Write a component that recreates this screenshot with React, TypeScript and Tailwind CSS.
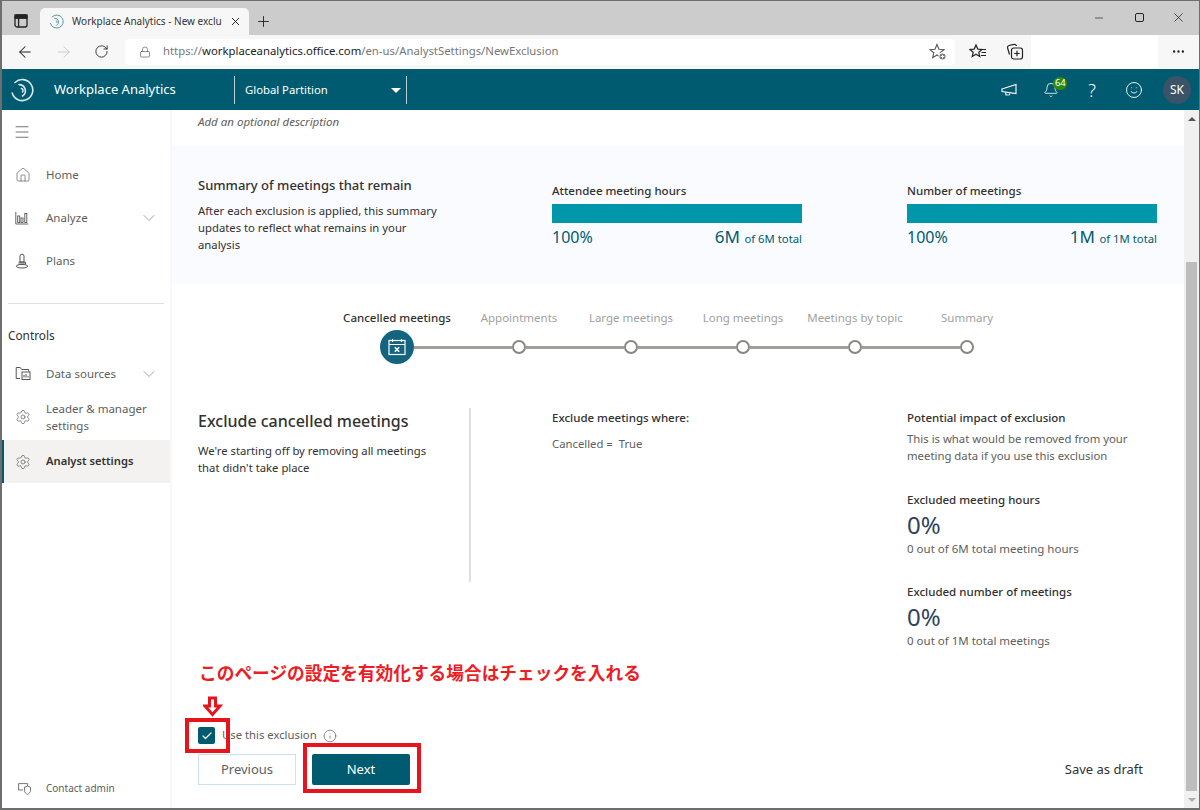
import React from "react";
import { ArrowLeft, ArrowRight, RotateCw, Lock, X, Plus, Minus, Home, ChevronDown, Menu, Settings, Check, Info, Bell, Smile, Ellipsis } from "lucide-react";

const Logo = ({ s, c }: { s: number; c: string }) => (
  <svg width={s} height={s} viewBox="0 0 24 24" fill="none" stroke={c} strokeWidth="1.6" strokeLinecap="round">
    <path d="M5 4.5 A10.5 10.5 0 1 1 2.2 15" />
    <path d="M9 6.6 A6.2 6.2 0 0 1 12.5 18" />
    <path d="M11.5 10.5 A2.2 2.2 0 0 1 12.5 14" />
  </svg>
);

const TabActions = () => (
  <svg width="16" height="16" viewBox="0 0 16 16" fill="none" stroke="#222" strokeWidth="1.3">
    <rect x="2" y="2" width="12" height="12" rx="2" />
    <path d="M2 5.2H14M5.6 5.2V14" />
    <rect x="2" y="2" width="12" height="3" fill="#222" />
  </svg>
);

const FavAdd = () => (
  <svg width="18" height="18" viewBox="0 0 18 18" fill="none" stroke="#555" strokeWidth="1.1">
    <path d="M8 1.5 10 6.200l5 .4-3.800 3.200 1.100 4.800L8 12l-4.300 2.600 1.100-4.800L1 6.600l5-.4Z" />
    <circle cx="13.500" cy="13.500" r="3.600" fill="#777" stroke="#fff" />
    <path d="M11.700 13.500h3.600M13.500 11.700v3.600" stroke="#fff" />
  </svg>
);

const Favs = () => (
  <svg width="18" height="18" viewBox="0 0 18 18" fill="none" stroke="#222" strokeWidth="1.2">
    <path d="M7 2 8.800 6.100l4.200.4-3.200 2.800 1 4.300L7 11.300l-3.800 2.300 1-4.300L1 6.500l4.200-.4Z" />
    <path d="M12 6.500h5M12.500 9.500h4.500M12 12.500h5" />
  </svg>
);

const Collections = () => (
  <svg width="18" height="18" viewBox="0 0 18 18" fill="none" stroke="#222" strokeWidth="1.2">
    <path d="M3.500 11.500 1.600 5A2 2 0 0 1 3 2.500l5-1.100A2 2 0 0 1 10.500 3" />
    <rect x="5.500" y="5" width="11" height="11" rx="2.200" />
    <path d="M11 7.800v5.400M8.300 10.500h5.400" />
  </svg>
);

const Megaphone = () => (
  <svg width="16" height="14" viewBox="0 0 16 14" fill="none" stroke="#fff" strokeWidth="1.1">
    <path d="M1 6 15 1.500v9L1 8.500Z" />
    <path d="M4.500 9.500 5 12l3.500-.2.3-1.500" />
  </svg>
);

const Chart = () => (
  <svg width="14" height="14" viewBox="0 0 14 14" fill="none" stroke="#555" strokeWidth="0.9">
    <path d="M.8 1v12h12.600" />
    <rect x="2.700" y="5" width="2" height="6.500" />
    <rect x="6" y="7" width="2" height="4.500" />
    <rect x="9.800" y="2.500" width="2" height="9" />
  </svg>
);

const Plans = () => (
  <svg width="14" height="16" viewBox="0 0 14 16" fill="none" stroke="#555" strokeWidth="1">
    <path d="M5 9V3.200a2 2 0 0 1 4 0V9Z" />
    <path d="M3.500 11h7M3.500 9.200h7v1.800" />
    <ellipse cx="7" cy="13.200" rx="5.700" ry="1.800" />
  </svg>
);

const DataSources = () => (
  <svg width="16" height="15" viewBox="0 0 16 15" fill="none" stroke="#555" strokeWidth="1">
    <path d="M5 12.500H1.200V1.500h4l1.500 2h7v2" />
    <rect x="7" y="6" width="8" height="7.500" />
    <path d="M9 11.500V9M11 11.500V8M13 11.500v-1.500" />
  </svg>
);

const ContactAdmin = () => (
  <svg width="13" height="12" viewBox="0 0 13 12" fill="none" stroke="#666" strokeWidth="0.9">
    <path d="M5 7H.6V.6h9V3" />
    <path d="M6.500 4.200 9.500 3.200l3 1v3.200c0 2-1.500 3.200-3 4-1.500-.8-3-2-3-4Z" />
  </svg>
);

const CalendarX = () => (
  <svg width="18" height="18" viewBox="0 0 18 18" fill="none" stroke="#fff" strokeWidth="1.2">
    <rect x="1" y="2.500" width="16" height="14" />
    <path d="M1 6.500h16M4.500 1v3M13.500 1v3" />
    <path d="m6.800 9.200 4.400 4.600m0-4.600-4.400 4.600" strokeWidth="1.5" />
  </svg>
);

const NavItem = ({ icon, label, chevron, cls }: { icon: React.ReactNode; label: React.ReactNode; chevron?: boolean; cls: string }) => (
  <div className={`flex items-center pr-[11px] pl-[13px] text-[11.5px] text-[#605e5c] ${cls}`}>
    <span className="flex w-[31px] shrink-0 items-center">{icon}</span>
    <span className="flex-1 leading-[17px]">{label}</span>
    {chevron && <ChevronDown size={20} strokeWidth={0.8} className="text-[#777]" />}
  </div>
);

const Metric = ({ title, big, total, cls }: { title: string; big: string; total: string; cls: string }) => (
  <div className={cls}>
    <div className="text-[11.5px] leading-[16px] font-medium text-[#323130]">{title}</div>
    <div className="mt-[5px] h-[19px] bg-[#0097ab]" />
    <div className="mt-[4px] flex items-baseline justify-between text-[#005b70]">
      <span className="text-[16px] leading-[20px]">100%</span>
      <span className="text-[17px] leading-[20px]">
        {big} <span className="text-[11.3px]">of {total} total</span>
      </span>
    </div>
  </div>
);

const steps = ["Appointments", "Large meetings", "Long meetings", "Meetings by topic", "Summary"];

const Node = () => <div className="h-[14px] w-[14px] shrink-0 rounded-full border-[2.5px] border-[#8a8886] bg-white" />;
const Bar = () => <div className="h-[3px] w-[98px] shrink-0 bg-[#a19f9d]" />;

const Stat = ({ title, sub, cls }: { title: string; sub: string; cls: string }) => (
  <div className={cls}>
    <div className="text-[11.5px] leading-[16px] font-medium text-[#323130]">{title}</div>
    <div className="mt-0 text-[24px] leading-[33px] text-[#2d4359]">0%</div>
    <div className="mt-0 text-[11.5px] leading-[16px] text-[#605e5c]">{sub}</div>
  </div>
);

export default function App() {
  return (
    <div className="relative box-border flex h-[810px] w-[1200px] flex-col overflow-hidden border-t border-r border-b-2 border-l-2 border-[#6e6e6e] bg-white font-['Noto_Sans','Noto_Sans_CJK_JP',sans-serif]">
      {/* Tab strip */}
      <div className="flex h-[34px] shrink-0 items-end bg-[#cccccc]">
        <div className="flex h-[26px] w-[38px] items-center justify-center pb-[3px]"><TabActions /></div>
        <div className="flex h-[27px] w-[209px] items-center rounded-t-[5px] bg-[#f7f7f7] pr-[7px] pl-[9px]">
          <Logo s={15} c="#5f97a5" />
          <span className="ml-[8px] text-[10px] whitespace-nowrap text-[#333]">Workplace Analytics - New exclu</span>
          <X size={13} strokeWidth={1.8} className="ml-auto text-[#222]" />
        </div>
        <div className="flex h-[27px] w-[28px] items-center justify-center pb-[1px]"><Plus size={17} strokeWidth={1.3} className="text-[#222]" /></div>
        <div className="ml-auto flex h-[34px] items-center pb-px text-[#222]">
          <div className="flex w-[40px] justify-center"><Minus size={12} strokeWidth={1.4} /></div>
          <div className="flex w-[40px] justify-center"><div className="h-[9px] w-[9px] rounded-[2px] border border-[#222]" /></div>
          <div className="flex w-[40px] justify-center pr-[1px]"><X size={15} strokeWidth={1.2} /></div>
        </div>
      </div>
      {/* Toolbar */}
      <div className="flex h-[33px] shrink-0 items-center bg-[#f7f7f7]">
        <div className="flex w-[123px] items-center pl-[14px]">
          <ArrowLeft size={18} strokeWidth={1.4} className="text-[#222]" />
          <ArrowRight size={18} strokeWidth={1.2} className="ml-[21px] text-[#c4c4c4]" />
          <RotateCw size={15} strokeWidth={1.4} className="ml-[21px] text-[#222]" />
        </div>
        <div className="flex h-[26px] w-[830px] items-center rounded-[4px] bg-white pr-[8px] pl-[14px]">
          <Lock size={12} strokeWidth={1.3} className="text-[#555]" />
          <span className="ml-[12px] text-[11.33px] text-[#777]">https://<span className="text-[#222]">workplaceanalytics.office.com</span>/en-us/AnalystSettings/NewExclusion</span>
          <span className="ml-auto"><FavAdd /></span>
        </div>
        <div className="ml-[14px] flex w-[60px] items-center"><Favs /><span className="ml-[19px]"><Collections /></span></div>
        <div className="ml-auto flex h-[33px] w-[127px] bg-white" />
        <div className="flex w-[41px] items-center justify-center pr-[1px]"><Ellipsis size={15} strokeWidth={1.8} className="text-[#222]" /></div>
      </div>
      {/* App bar */}
      <div className="mt-px flex h-[41px] shrink-0 items-center bg-[#005b70] text-white">
        <div className="flex w-[202px] items-center pl-[8px]">
          <Logo s={24} c="#d8e8ec" />
          <span className="ml-[20px] pt-px text-[13px]">Workplace Analytics</span>
        </div>
        <div className="ml-[30px] flex h-[28px] w-[173px] items-center border-x border-[#b8d0d6] pr-[5px] pl-[10px]">
          <span className="pt-px text-[11.3px]">Global Partition</span>
          <span className="mt-[2px] ml-auto h-0 w-0 border-x-[5px] border-t-[5px] border-x-transparent border-t-white" />
        </div>
        <div className="ml-auto flex items-center pr-[8px]">
          <Megaphone />
          <div className="relative ml-[26px]">
            <Bell size={16} strokeWidth={1.2} />
            <span className="absolute top-[-5px] left-[10px] flex h-[13px] w-[14px] items-center justify-center rounded-full bg-[#2d8a0e] text-[9.5px] leading-none">64</span>
          </div>
          <span className="ml-[29px] text-[18px] leading-none font-light">?</span>
          <Smile size={18} strokeWidth={1.2} className="ml-[29px]" />
          <div className="ml-[20px] flex h-[28px] w-[28px] items-center justify-center rounded-full bg-[#3a5366] text-[12px]">SK</div>
        </div>
      </div>
      {/* Body */}
      <div className="flex min-h-0 flex-1">
        {/* Sidebar */}
        <div className="flex w-[168px] shrink-0 flex-col pt-[13px] shadow-[1px_0_3px_rgba(0,0,0,0.06)]">
          <div className="pl-[11px]"><Menu size={18} strokeWidth={1} className="text-[#444]" /></div>
          <NavItem cls="mt-[12px] h-[43px]" icon={<Home size={16} strokeWidth={1} className="text-[#555]" />} label="Home" />
          <NavItem cls="h-[43px]" icon={<Chart />} label="Analyze" chevron />
          <NavItem cls="h-[43px]" icon={<Plans />} label="Plans" />
          <div className="mx-[6px] mt-[21px] h-px bg-[#e1dfdd]" />
          <div className="mt-[23px] pl-[6px] text-[11.8px] leading-[17px] text-[#323130]">Controls</div>
          <NavItem cls="mt-[8px] h-[43px]" icon={<DataSources />} label="Data sources" chevron />
          <NavItem cls="mt-[5px] h-[34px]" icon={<Settings size={16} strokeWidth={1} className="text-[#555]" />} label={<>Leader &amp; manager<br />settings</>} />
          <div className="mt-[6px] flex h-[43px] items-center border-l-2 border-[#005b70] bg-[#f3f2f1] pl-[11px] text-[11.2px] font-semibold text-[#323130]">
            <Settings size={16} strokeWidth={1} className="mr-[15px] text-[#555]" />
            Analyst settings
          </div>
          <div className="mt-auto mb-[12px]">
            <div className="flex items-center pl-[16px] text-[10px] text-[#605e5c]"><span className="w-[28px]"><ContactAdmin /></span>Contact admin</div>
          </div>
        </div>
        {/* Main */}
        <div className="flex min-w-0 flex-1 flex-col border-l-2 border-[#f8f8f8] text-[#323130]">
          <div className="mt-[4px] pl-[26px] text-[11.5px] leading-[16px] text-[#605e5c] italic">Add an optional description</div>
          <div className="mt-[16px] flex h-[138px] shrink-0 bg-[#fafbfe] pl-[26px]">
            <div className="w-[354px] pt-[30px]">
              <div className="text-[13px] leading-[18px] font-medium">Summary of meetings that remain</div>
              <div className="mt-[8px] w-[250px] text-[11.3px] leading-[17px]">After each exclusion is applied, this summary updates to reflect what remains in your analysis</div>
            </div>
            <Metric cls="w-[250px] pt-[37px]" title="Attendee meeting hours" big="6M" total="6M" />
            <Metric cls="ml-[105px] w-[250px] pt-[37px]" title="Number of meetings" big="1M" total="1M" />
          </div>
          {/* Stepper */}
          <div className="mt-[26px] flex pl-[159px] text-[11.5px] leading-[16px] text-[#a19f9d]">
            <div className="w-[132px] text-center font-medium text-[#323130]">Cancelled meetings</div>
            {steps.map((s) => <div key={s} className="w-[112px] text-center whitespace-nowrap">{s}</div>)}
          </div>
          <div className="mt-[4px] flex items-center pl-[208px]">
            <div className="flex h-[34px] w-[34px] shrink-0 items-center justify-center rounded-full bg-[#14637f]"><CalendarX /></div>
            {steps.map((s) => <React.Fragment key={s}><Bar /><Node /></React.Fragment>)}
          </div>
          {/* Details */}
          <div className="mt-[44px] flex pl-[26px]">
            <div className="h-[174px] w-[273px] border-r-2 border-[#e1dfdd]">
              <div className="text-[16px] leading-[26px] font-medium">Exclude cancelled meetings</div>
              <div className="mt-[8px] w-[240px] text-[11.3px] leading-[17px]">We're starting off by removing all meetings that didn't take place</div>
            </div>
            <div className="ml-[81px] w-[355px] pt-[2px]">
              <div className="text-[11.5px] leading-[16px] font-medium">Exclude meetings where:</div>
              <div className="mt-[10px] text-[11.3px] leading-[16px] text-[#605e5c]">Cancelled =&nbsp; True</div>
            </div>
            <div className="w-[250px] pt-[2px]">
              <div className="text-[11.5px] leading-[16px] font-medium">Potential impact of exclusion</div>
              <div className="mt-[4px] text-[11.35px] leading-[17px] text-[#605e5c]">This is what would be removed from your meeting data if you use this exclusion</div>
              <Stat cls="mt-[28px]" title="Excluded meeting hours" sub="0 out of 6M total meeting hours" />
              <Stat cls="mt-[27px]" title="Excluded number of meetings" sub="0 out of 1M total meetings" />
            </div>
          </div>
          {/* Footer */}
          <div className="mt-[12px] pl-[27px] text-[17.7px] leading-[24px] font-bold text-[#ee1c25]">このページの設定を有効化する場合はチェックを入れる</div>
          <div className="mt-[42px] flex items-center pl-[26px] text-[11.3px] text-[#605e5c]">
            <div className="flex h-[17px] w-[17px] items-center justify-center rounded-[2px] bg-[#005b70]"><Check size={12} strokeWidth={2.4} className="text-white" /></div>
            <span className="ml-[7px]">Use this exclusion</span>
            <Info size={14} strokeWidth={1} className="ml-[6px] text-[#444]" />
          </div>
          <div className="mt-[10px] flex items-center pr-[41px] pl-[26px]">
            <div className="flex h-[31px] w-[98px] items-center justify-center border border-[#c8e4ea] text-[13px] text-[#605e5c]">Previous</div>
            <div className="ml-[16px] flex h-[31px] w-[98px] items-center justify-center rounded-[2px] bg-[#005b70] text-[13px] text-white">Next</div>
            <div className="ml-auto text-[13px] text-[#323130]">Save as draft</div>
          </div>
        </div>
        {/* Scrollbar */}
        <div className="flex w-[15px] shrink-0 flex-col bg-[#f0f0f0]">
          <div className="flex h-[17px] items-center justify-center"><span className="h-0 w-0 border-x-[4px] border-b-[4px] border-x-transparent border-b-[#555]" /></div>
          <div className="mt-[135px] w-[11px] flex-1 self-center bg-[#bdbdbd]" />
          <div className="flex h-[17px] items-center justify-center"><span className="h-0 w-0 border-x-[4px] border-t-[4px] border-x-transparent border-t-[#aaa]" /></div>
        </div>
      </div>
      {/* Annotations */}
      <svg className="absolute top-[695px] left-[201px]" width="20" height="21" viewBox="0 0 20 21" fill="#fff" stroke="#e8141c" strokeWidth="3">
        <path d="M6.500 2h6v8h4.500L9.500 18.500 2 10h4.500Z" />
      </svg>
      <div className="absolute top-[717px] left-[183px] h-[35px] w-[45px] border-[4px] border-[#e8141c]" />
      <div className="absolute top-[742px] left-[301px] h-[50px] w-[118px] border-[4px] border-[#e8141c]" />
    </div>
  );
}
